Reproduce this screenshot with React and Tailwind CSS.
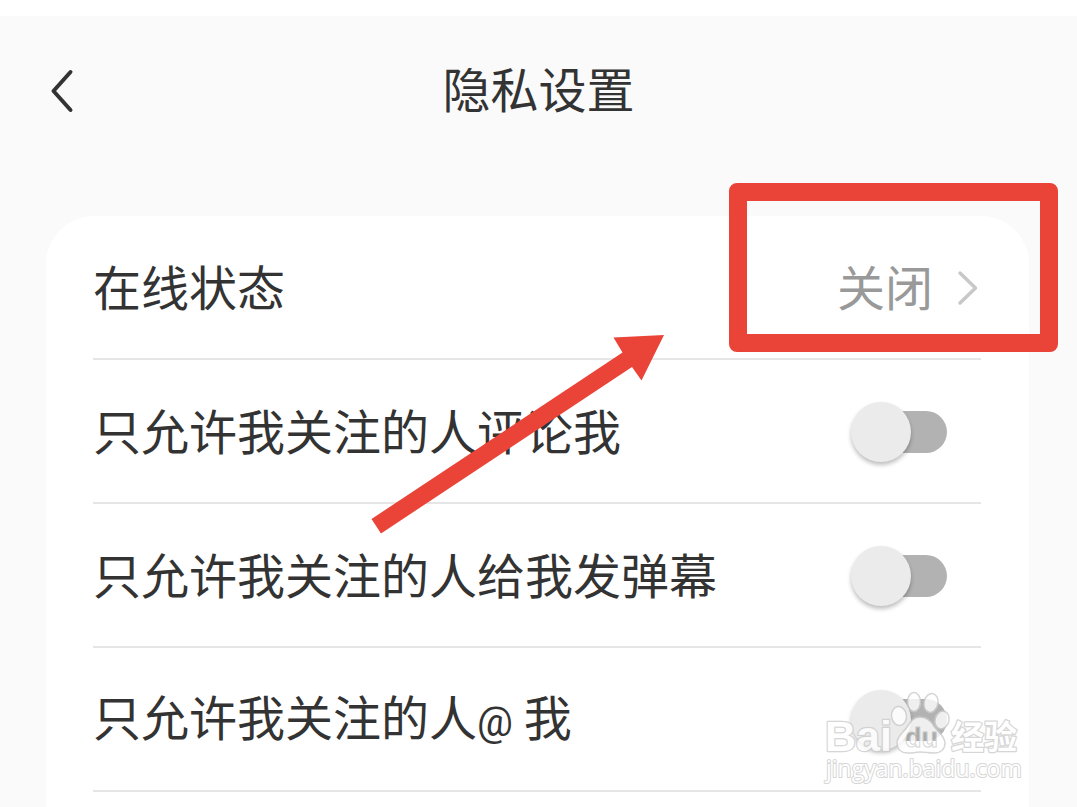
const options = [
  { id: "comment", label: "只允许我关注的人评论我" },
  { id: "danmu", label: "只允许我关注的人给我发弹幕" },
  { id: "mention", label: <>只允许我关注的人<span className="font-['Roboto',sans-serif] text-[40px]">@</span> 我</> },
];

const Header = () => {
  return (
    <header className="grid h-[150px] shrink-0 grid-cols-[1fr_auto_1fr] items-center px-12 mb-[50px]">
      <button aria-label="返回" className="justify-self-start cursor-pointer">
        <svg width="28" height="48" viewBox="0 0 28 48" fill="none" stroke="#333333" strokeWidth="4" strokeLinecap="round" strokeLinejoin="round">
          <path d="M22.5 5 L5.5 24 L22.5 43" />
        </svg>
      </button>
      <h1 className="pb-2 text-5xl">隐私设置</h1>
    </header>
  );
};

const StatusRow = () => {
  return (
    <button className="flex h-36 w-full items-center justify-between border-b-2 border-[#e6e6e6] pt-0.5 text-left cursor-pointer">
      <span className="pb-1.5">在线状态</span>
      <span className="flex items-center gap-5 text-[#999999]">
        <span className="pb-1.5">关闭</span>
        <svg width="28" height="40" viewBox="0 0 28 40" fill="none" stroke="#c8c8c8" strokeWidth="3.5" strokeLinecap="round" strokeLinejoin="round">
          <path d="M7 5 L22.5 20 L7 35" />
        </svg>
      </span>
    </button>
  );
};

const SwitchRow = ({ id, label }) => {
  return (
    <div className="flex h-36 items-center justify-between border-b-2 border-[#e6e6e6] pt-0.5">
      <label htmlFor={id} className="pb-1.5">{label}</label>
      <input
        id={id}
        type="checkbox"
        role="switch"
        className="mr-[34px] flex h-[42px] w-[92px] shrink-0 appearance-none items-center rounded-full bg-[#b2b2b2] cursor-pointer before:-ml-1 before:size-[60px] before:shrink-0 before:rounded-full before:bg-[#ebebeb] before:shadow-[0_3px_4px_rgba(0,0,0,0.25)] before:content-[''] checked:justify-end checked:bg-pink-300"
      />
    </div>
  );
};

const Watermark = () => {
  return (
    <svg className="absolute right-[55px] top-[672px] pointer-events-none" width="200" height="100" viewBox="0 0 200 100" fill="#ffffff" stroke="#cccccc" strokeWidth="1.5" strokeLinejoin="round">
      <defs>
        <linearGradient id="du" gradientUnits="userSpaceOnUse" x1="0" y1="0" x2="0" y2="100">
          <stop offset="0.53" stopColor="#a8a8a8" />
          <stop offset="0.53" stopColor="#ffffff" />
        </linearGradient>
      </defs>
      <g opacity="0.8">
        <g className="[paint-order:stroke]" strokeWidth="2.5">
          <text x="3" y="63" className="font-['Liberation_Sans',sans-serif] text-[43px] font-bold">Bai</text>
          <text x="129" y="61" className="font-['Noto_Sans_CJK_SC',sans-serif] text-[33px] font-bold">经验</text>
          <text x="4" y="89" strokeWidth="2" className="font-['Open_Sans',sans-serif] text-[23px]">jingyan.baidu.com</text>
        </g>
        <ellipse cx="77" cy="28" rx="7.5" ry="9.5" transform="rotate(-8 77 28)" />
        <ellipse cx="92" cy="14" rx="6.5" ry="9.5" />
        <ellipse cx="109" cy="15" rx="7" ry="9.5" transform="rotate(12 109 15)" />
        <ellipse cx="120" cy="32" rx="7" ry="9" transform="rotate(15 120 32)" />
        <path d="M98 29 C91 29 88 34 85 39 C82 44 75 48 75 55 C75 61 79 65 86 65 C92 65 94 64 98 64 C103 64 107 65 112 65 C119 65 123 61 123 55 C123 48 115 43 112 38 C109 33 105 29 98 29 Z" />
        <text x="83" y="59" fill="url(#du)" strokeWidth="1" className="font-['Liberation_Sans',sans-serif] text-[27px] font-bold">du</text>
      </g>
    </svg>
  );
};

const Arrow = () => {
  return (
    <svg className="absolute left-[370px] top-[317px] pointer-events-none" width="296" height="202" viewBox="370 333 296 202">
      <polygon fill="#e94437" points="371.5,519 381,533.5 632,367 641.5,380.5 664,335 613.5,337.5 622.5,352.5" />
    </svg>
  );
};

export default function App() {
  return (
    <div className="relative flex min-h-screen flex-col border-t-16 border-white bg-[#fafafa] font-['Noto_Sans_CJK_SC',sans-serif] text-[#333333]">
      <Header />
      <main className="ml-[46px] mr-12 flex-1 rounded-t-[48px] bg-white pl-[47px] pr-12 text-5xl">
        <StatusRow />
        {options.map((option) => (
          <SwitchRow key={option.id} id={option.id} label={option.label} />
        ))}
      </main>
      <div className="absolute right-[19px] top-[167px] h-[169px] w-[329px] rounded-lg border-18 border-[#e94437] pointer-events-none"></div>
      <Arrow />
      <Watermark />
    </div>
  );
}
